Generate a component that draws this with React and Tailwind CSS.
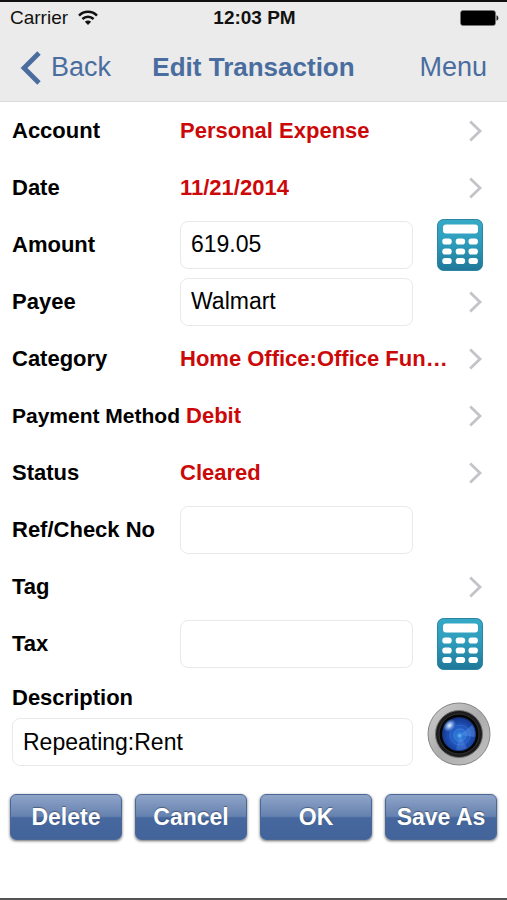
import React, { useState } from 'react';

const ChevronRight = () => (
  <svg width="14" height="22" viewBox="0 0 14 22" fill="none" aria-hidden="true" className="shrink-0">
    <path d="M1.2 1.6 L11 11 L1.2 20.4" stroke="#c4c4c8" strokeWidth="2.8" />
  </svg>
);

const WifiIcon = () => (
  <svg width="20" height="16" viewBox="0 0 20 16" fill="none" aria-hidden="true">
    <path d="M1 5.6 C6 0.6 14 0.6 19 5.6" stroke="#111" strokeWidth="2.5" />
    <path d="M4.4 9 C7.6 5.9 12.4 5.9 15.6 9" stroke="#111" strokeWidth="2.5" />
    <path d="M6.9 11.7 C8.8 10 11.2 10 13.1 11.7 L10 15 Z" fill="#111" />
  </svg>
);

const BatteryIcon = () => (
  <svg width="39" height="16" viewBox="0 0 39 16" aria-hidden="true">
    <rect x="0.5" y="0.5" width="35" height="15" rx="2.5" fill="#000" stroke="#777" strokeWidth="0.6" />
    <path d="M36.5 5.2 C39 6.2 39 9.8 36.5 10.8 Z" fill="#222" />
  </svg>
);

const CalculatorIcon = () => (
  <svg width="46" height="52" viewBox="0 0 46 52" aria-hidden="true">
    <defs>
      <linearGradient id="calcBody" x1="0" y1="0" x2="0" y2="1">
        <stop offset="0" stopColor="#35a9c6" />
        <stop offset="0.45" stopColor="#2e9dbd" />
        <stop offset="1" stopColor="#1f7798" />
      </linearGradient>
    </defs>
    <rect x="0.5" y="0.5" width="45" height="51" rx="6" fill="url(#calcBody)" stroke="#2a86a3" />
    <rect x="6" y="5.5" width="35" height="9" rx="3" fill="#fff" />
    {[19.5, 29.5, 39].map((y) =>
      [5.3, 18.7, 31.5].map((x) => (
        <rect key={`${x}-${y}`} x={x} y={y} width="9.4" height="6" rx="2.8" fill="#fff" />
      ))
    )}
  </svg>
);

const CameraIcon = () => (
  <svg width="64" height="64" viewBox="0 0 64 64" aria-hidden="true">
    <defs>
      <linearGradient id="camRing" x1="0" y1="0" x2="1" y2="1">
        <stop offset="0" stopColor="#cfcfcf" />
        <stop offset="0.5" stopColor="#acacac" />
        <stop offset="1" stopColor="#c2c2c2" />
      </linearGradient>
      <radialGradient id="camLens" cx="0.52" cy="0.55" r="0.58">
        <stop offset="0" stopColor="#6cc0f6" />
        <stop offset="0.14" stopColor="#2f7ad8" />
        <stop offset="0.5" stopColor="#2054bd" />
        <stop offset="0.85" stopColor="#173b92" />
        <stop offset="1" stopColor="#0a1640" />
      </radialGradient>
      <radialGradient id="camShine">
        <stop offset="0" stopColor="#f0f8ff" />
        <stop offset="0.4" stopColor="#a4caf8" stopOpacity="0.8" />
        <stop offset="1" stopColor="#5a8fe0" stopOpacity="0" />
      </radialGradient>
    </defs>
    <circle cx="32" cy="32" r="31" fill="url(#camRing)" stroke="#858585" />
    <circle cx="32" cy="32" r="23.5" fill="#1c1c1c" stroke="#6f6f6f" />
    <circle cx="32" cy="32" r="20" fill="#050505" stroke="#333" />
    <circle cx="32" cy="32" r="17" fill="url(#camLens)" />
    <path d="M33 33 L45 23 A15 15 0 0 1 47.5 35 Z" fill="#5b95ea" opacity="0.45" />
    <path d="M33 33 L29 47.5 A15 15 0 0 0 40 46 Z" fill="#5b95ea" opacity="0.35" />
    <circle cx="33" cy="33" r="6" fill="none" stroke="#5b9bea" strokeWidth="0.6" opacity="0.7" />
    <circle cx="33" cy="33" r="10" fill="none" stroke="#5b9bea" strokeWidth="0.6" opacity="0.5" />
    <ellipse cx="22.5" cy="23.5" rx="7.5" ry="5.5" transform="rotate(-45 22.5 23.5)" fill="url(#camShine)" />
  </svg>
);

const inputClass =
  'h-12 w-full min-w-0 flex-1 rounded-lg border border-[#e9e9e9] bg-white px-2.5 text-[23px] text-black focus:outline-none focus:ring-2 focus:ring-blue-500';
const rowClass = 'flex h-[57px] items-center pl-3 pr-6';
const labelClass = 'min-w-42 shrink-0 pr-1.5 font-bold text-black';

const PickerRow = ({ id, label, value, compact }) => (
  <div className={rowClass}>
    <label htmlFor={id} className={`${labelClass} ${compact ? 'text-[21px]' : 'text-[22px]'}`}>{label}</label>
    <button id={id} type="button" className="flex h-full min-w-0 flex-1 items-center justify-between text-left">
      <span className="truncate text-[22px] font-bold text-[#cc0808]">{value}</span>
      <ChevronRight />
    </button>
  </div>
);

const InputRow = ({ id, label, value, onChange, action, children }) => (
  <div className={rowClass}>
    <label htmlFor={id} className={`${labelClass} text-[22px]`}>{label}</label>
    <input id={id} name={id} type="text" value={value} onChange={onChange} className={inputClass} />
    <div className="flex w-[70px] shrink-0 items-center justify-end">
      {action && (
        <button type="button" aria-label={action}>{children}</button>
      )}
    </div>
  </div>
);

const App = () => {
  const [formData, setFormData] = useState({
    amount: '619.05',
    payee: 'Walmart',
    refNo: '',
    tax: '',
    description: 'Repeating:Rent',
  });

  const handleChange = (e) => {
    const { name, value } = e.target;
    setFormData({
      ...formData,
      [name]: value,
    });
  };

  return (
    <div className="flex min-h-screen flex-col border-t-2 border-b-2 border-t-[#111] border-b-[#555] bg-white font-['Liberation_Sans',Arial,sans-serif]">
      <header className="border-b border-[#dcdcdc] bg-[#ebebeb]">
        <div className="grid h-8 grid-cols-3 items-center pl-2.5 pr-2 text-[19px] text-[#111]">
          <div className="flex items-center gap-2.5">
            <span>Carrier</span>
            <WifiIcon />
          </div>
          <span className="text-center font-bold">12:03 PM</span>
          <div className="flex justify-end">
            <BatteryIcon />
          </div>
        </div>
        <nav className="grid h-[67px] grid-cols-[1fr_auto_1fr] items-center px-5 text-[27px] text-[#4a6d9f]">
          <button type="button" className="flex items-center gap-2.5 justify-self-start">
            <svg width="21" height="34" viewBox="0 0 21 34" fill="none" aria-hidden="true">
              <path d="M19 2 L4 17 L19 32" stroke="#4a6d9f" strokeWidth="4.8" />
            </svg>
            Back
          </button>
          <h1 className="text-[26px] font-bold">Edit Transaction</h1>
          <button type="button" className="justify-self-end">Menu</button>
        </nav>
      </header>

      <form onSubmit={(e) => e.preventDefault()}>
        <PickerRow id="account" label="Account" value="Personal Expense" />
        <PickerRow id="date" label="Date" value="11/21/2014" />
        <InputRow id="amount" label="Amount" value={formData.amount} onChange={handleChange} action="Amount calculator">
          <CalculatorIcon />
        </InputRow>
        <InputRow id="payee" label="Payee" value={formData.payee} onChange={handleChange} action="Choose payee">
          <ChevronRight />
        </InputRow>
        <PickerRow id="category" label="Category" value="Home Office:Office Fun…" />
        <PickerRow id="paymentMethod" label="Payment Method" value="Debit" compact />
        <PickerRow id="status" label="Status" value="Cleared" />
        <InputRow id="refNo" label="Ref/Check No" value={formData.refNo} onChange={handleChange} />
        <PickerRow id="tag" label="Tag" value="" />
        <InputRow id="tax" label="Tax" value={formData.tax} onChange={handleChange} action="Tax calculator">
          <CalculatorIcon />
        </InputRow>

        <div className="flex items-end gap-3.5 pl-3 pr-4 pt-2.5">
          <div className="flex min-w-0 flex-1 flex-col gap-1">
            <label htmlFor="description" className="text-[22px] leading-8 font-bold text-black">Description</label>
            <input
              id="description"
              name="description"
              type="text"
              value={formData.description}
              onChange={handleChange}
              className={`${inputClass} flex-none`}
            />
          </div>
          <button type="button" aria-label="Take photo">
            <CameraIcon />
          </button>
        </div>

        <div className="mt-7 grid grid-cols-4 gap-[13px] px-2.5">
          {['Delete', 'Cancel', 'OK', 'Save As'].map((name) => (
            <button
              key={name}
              type="button"
              className="h-[46px] rounded-md border border-[#4b6795] bg-[linear-gradient(to_bottom,#8fa4c8_0%,#6682b0_48%,#46689f_52%,#42649a_100%)] text-[23px] font-bold whitespace-nowrap text-white shadow-[0_1px_3px_rgba(0,0,0,0.6)] text-shadow-[0_-1px_1px_rgba(0,0,0,0.35)]"
            >
              {name}
            </button>
          ))}
        </div>
      </form>
    </div>
  );
};

export default App;
